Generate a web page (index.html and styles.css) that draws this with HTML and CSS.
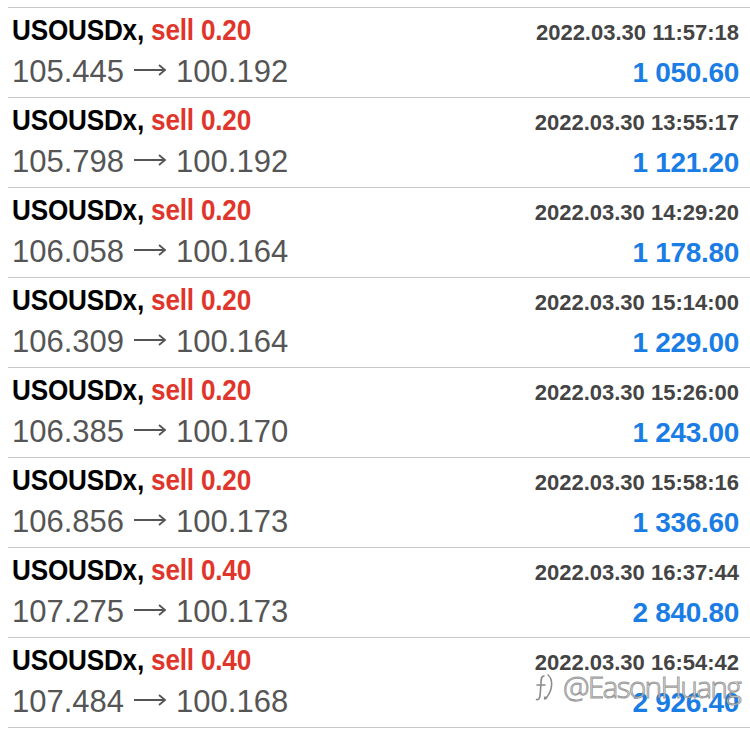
FILE: index.html
```html
<!DOCTYPE html>
<html lang="en">
<head>
    <meta charset="UTF-8">
    <title>History</title>
    <link rel="stylesheet" href="styles.css">
</head>
<body>

<div class="deals">
    <div class="deal">
        <div class="deal-row">
            <span class="title">USOUSDx, <span class="side">sell 0.20</span></span>
            <span class="time">2022.03.30 11:57:18</span>
        </div>
        <div class="deal-row">
            <span class="prices">105.445<svg class="arrow" viewBox="0 0 34 12"><path d="M1 6H32M26 1L32 6L26 11"/></svg>100.192</span>
            <span class="profit">1 050.60</span>
        </div>
    </div>
    <div class="deal">
        <div class="deal-row">
            <span class="title">USOUSDx, <span class="side">sell 0.20</span></span>
            <span class="time">2022.03.30 13:55:17</span>
        </div>
        <div class="deal-row">
            <span class="prices">105.798<svg class="arrow" viewBox="0 0 34 12"><path d="M1 6H32M26 1L32 6L26 11"/></svg>100.192</span>
            <span class="profit">1 121.20</span>
        </div>
    </div>
    <div class="deal">
        <div class="deal-row">
            <span class="title">USOUSDx, <span class="side">sell 0.20</span></span>
            <span class="time">2022.03.30 14:29:20</span>
        </div>
        <div class="deal-row">
            <span class="prices">106.058<svg class="arrow" viewBox="0 0 34 12"><path d="M1 6H32M26 1L32 6L26 11"/></svg>100.164</span>
            <span class="profit">1 178.80</span>
        </div>
    </div>
    <div class="deal">
        <div class="deal-row">
            <span class="title">USOUSDx, <span class="side">sell 0.20</span></span>
            <span class="time">2022.03.30 15:14:00</span>
        </div>
        <div class="deal-row">
            <span class="prices">106.309<svg class="arrow" viewBox="0 0 34 12"><path d="M1 6H32M26 1L32 6L26 11"/></svg>100.164</span>
            <span class="profit">1 229.00</span>
        </div>
    </div>
    <div class="deal">
        <div class="deal-row">
            <span class="title">USOUSDx, <span class="side">sell 0.20</span></span>
            <span class="time">2022.03.30 15:26:00</span>
        </div>
        <div class="deal-row">
            <span class="prices">106.385<svg class="arrow" viewBox="0 0 34 12"><path d="M1 6H32M26 1L32 6L26 11"/></svg>100.170</span>
            <span class="profit">1 243.00</span>
        </div>
    </div>
    <div class="deal">
        <div class="deal-row">
            <span class="title">USOUSDx, <span class="side">sell 0.20</span></span>
            <span class="time">2022.03.30 15:58:16</span>
        </div>
        <div class="deal-row">
            <span class="prices">106.856<svg class="arrow" viewBox="0 0 34 12"><path d="M1 6H32M26 1L32 6L26 11"/></svg>100.173</span>
            <span class="profit">1 336.60</span>
        </div>
    </div>
    <div class="deal">
        <div class="deal-row">
            <span class="title">USOUSDx, <span class="side">sell 0.40</span></span>
            <span class="time">2022.03.30 16:37:44</span>
        </div>
        <div class="deal-row">
            <span class="prices">107.275<svg class="arrow" viewBox="0 0 34 12"><path d="M1 6H32M26 1L32 6L26 11"/></svg>100.173</span>
            <span class="profit">2 840.80</span>
        </div>
    </div>
    <div class="deal">
        <div class="deal-row">
            <span class="title">USOUSDx, <span class="side">sell 0.40</span></span>
            <span class="time">2022.03.30 16:54:42</span>
        </div>
        <div class="deal-row">
            <span class="prices">107.484<svg class="arrow" viewBox="0 0 34 12"><path d="M1 6H32M26 1L32 6L26 11"/></svg>100.168</span>
            <span class="profit">2 926.40</span>
        </div>
        <!-- 水印 -->
        <div class="watermark">
            <svg class="wm-logo" viewBox="0 0 20 30"><path d="M9 4C6 4 6 8 6 12L5 24C4.5 27 3 28 1.5 27.5M2 13H10M13 3C18 7 18 17 12 25C10 28 9 27 10 25"/></svg>
            <span>@EasonHuang</span>
        </div>
    </div>
</div>

</body>
</html>
```

FILE: styles.css
```css
body {
    margin: 0;
    background-color: #fff;
    font-family: "Liberation Sans", Arial, sans-serif;
}
.deals {
    padding-top: 7px;
}
.deal {
    position: relative;
    margin-left: 8px;
    height: 89px;
    border-top: 1px solid #c8c8c8;
    padding: 0 11px 0 4px;
}
.deals .deal:last-child {
    border-bottom: 1px solid #c8c8c8;
}
.deal-row {
    display: flex;
    justify-content: space-between;
    align-items: baseline;
}
.deal-row:first-child {
    height: 44px;
}
/* 标题是窄体字 */
.title {
    display: inline-block;
    font-weight: bold;
    font-size: 29px;
    line-height: 44px;
    letter-spacing: -0.2px;
    color: #000;
    white-space: nowrap;
    transform: scaleX(0.9);
    transform-origin: left center;
}
.side {
    color: #e0352b;
}
.time {
    font-weight: bold;
    font-size: 22px;
    color: #444;
}
.prices {
    font-size: 31px;
    line-height: 40px;
    color: #555;
    white-space: nowrap;
}
.arrow {
    width: 34px;
    height: 12px;
    margin: 0 9px 0 9px;
    vertical-align: 6px;
    fill: none;
    stroke: #555;
    stroke-width: 1.8;
}
.profit {
    font-weight: bold;
    font-size: 28px;
    letter-spacing: -0.3px;
    color: #1a7de6;
}
.watermark {
    position: absolute;
    right: 10px;
    top: 28px;
    display: flex;
    align-items: center;
    gap: 8px;
    font-family: "Open Sans", sans-serif;
    font-size: 30px;
    font-weight: 300;
    letter-spacing: -1.8px;
    color: rgba(255, 255, 255, 0.85);
    -webkit-text-stroke: 1px rgba(110, 110, 110, 0.7);
}
.wm-logo {
    width: 20px;
    height: 30px;
    fill: none;
    stroke: rgba(110, 110, 110, 0.8);
    stroke-width: 1.6;
    stroke-linecap: round;
}
```
